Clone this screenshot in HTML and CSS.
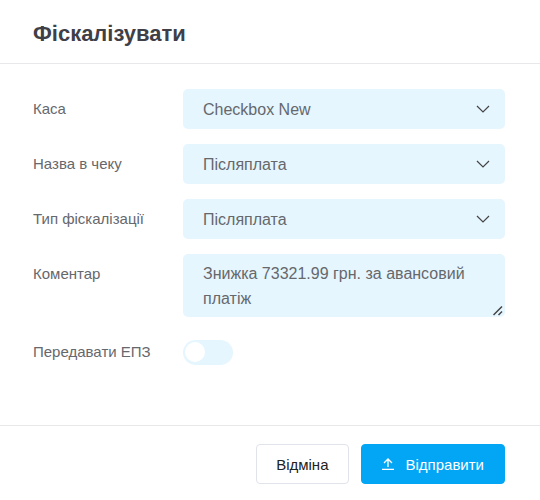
FILE: index.html
```html
<!DOCTYPE html>
<html lang="uk">
<head>
    <meta charset="UTF-8">
    <meta name="viewport" content="width=device-width, initial-scale=1.0">
    <title>Фіскалізувати</title>
    <link rel="stylesheet" href="styles.css">
</head>
<body>

<form class="modal">
    <header class="modal-header">
        <h1>Фіскалізувати</h1>
    </header>

    <div class="modal-body">
        <div class="form-group">
            <label for="cashbox">Каса</label>
            <select id="cashbox" name="cashbox">
                <option>Checkbox New</option>
            </select>
        </div>
        <div class="form-group">
            <label for="receiptName">Назва в чеку</label>
            <select id="receiptName" name="receiptName">
                <option>Післяплата</option>
            </select>
        </div>
        <div class="form-group">
            <label for="type">Тип фіскалізації</label>
            <select id="type" name="type">
                <option>Післяплата</option>
            </select>
        </div>
        <div class="form-group">
            <label for="comment">Коментар</label>
            <div class="textarea-wrap">
                <textarea id="comment" name="comment" rows="2">Знижка 73321.99 грн. за авансовий платіж</textarea>
                <svg class="resize-grip" width="10" height="10" viewBox="0 0 10 10" aria-hidden="true">
                    <path d="M0.5 9L9 0.5M5.5 9L9 5.5" />
                </svg>
            </div>
        </div>
        <div class="form-group form-group-switch">
            <label for="epz">Передавати ЕПЗ</label>
            <input type="checkbox" class="switch" id="epz" name="epz">
        </div>
    </div>

    <footer class="modal-footer">
        <button type="button" class="btn btn-cancel">Відміна</button>
        <button type="submit" class="btn btn-submit">
            <svg width="12" height="12" viewBox="0 0 12 12" aria-hidden="true">
                <path d="M0 11.5H12M6 9V1M2 5L6 1L10 5" />
            </svg>
            Відправити
        </button>
    </footer>
</form>

</body>
</html>
```
FILE: styles.css
```css
* {
    box-sizing: border-box;
}
body {
    margin: 0;
    font-family: "Liberation Sans", Arial, sans-serif;
    font-size: 15px;
    color: #66686c;
    background-color: #fff;
}
.modal-header {
    padding: 20px 33px 15px;
    border-bottom: 1px solid #e8e8ea;
}
h1 {
    margin: 0;
    font-size: 22px;
    line-height: 28px;
    color: #3f3f48;
}
.modal-body {
    display: flex;
    flex-direction: column;
    gap: 15px;
    padding: 25px 35px 53px 33px;
}
.form-group {
    display: grid;
    grid-template-columns: 150px 1fr;
    align-items: start;
}
label {
    line-height: 40px;
}
select,
textarea {
    display: block;
    width: 100%;
    border: none;
    border-radius: 5px;
    background-color: #e5f6ff;
    color: #66686c;
    font-family: inherit;
    font-size: 16px;
}
select {
    height: 40px;
    padding: 0 40px 0 20px;
    appearance: none;
    background-image: url("data:image/svg+xml,%3Csvg xmlns='http://www.w3.org/2000/svg' width='14' height='8' viewBox='0 0 14 8'%3E%3Cpath d='M1 1L7 7L13 1' fill='none' stroke='%23444' stroke-width='1.2'/%3E%3C/svg%3E");
    background-repeat: no-repeat;
    background-position: right 15px center;
}
.textarea-wrap {
    position: relative;
}
textarea {
    height: 63px;
    padding: 7px 20px 6px;
    line-height: 25px;
    resize: none;
    overflow: hidden;
}
.resize-grip {
    position: absolute;
    right: 2px;
    bottom: 1px;
    fill: none;
    stroke: #444;
    stroke-width: 1.5;
}
.form-group-switch {
    align-items: center;
}
.switch {
    display: flex;
    align-items: center;
    width: 50px;
    height: 25px;
    margin: 0;
    padding: 2px;
    appearance: none;
    border-radius: 13px;
    background-color: #e5f6ff;
    cursor: pointer;
}
.switch::before {
    content: "";
    width: 20px;
    height: 20px;
    border-radius: 50%;
    background-color: #fff;
}
.switch:checked {
    justify-content: flex-end;
    background-color: #03a5f5;
}
.modal-footer {
    display: flex;
    justify-content: flex-end;
    gap: 12px;
    padding: 18px 35px 16px;
    border-top: 1px solid #e8e8ea;
}
.btn {
    display: flex;
    align-items: center;
    gap: 12px;
    height: 40px;
    padding: 0 19px;
    border: 1px solid #e0e3ea;
    border-radius: 4px;
    font-family: inherit;
    font-size: 15px;
    cursor: pointer;
}
.btn-cancel {
    background-color: #fff;
    color: #222;
}
.btn-submit {
    padding: 0 20px;
    border-color: #03a5f5;
    background-color: #03a5f5;
    color: #fff;
}
.btn svg {
    fill: none;
    stroke: #fff;
    stroke-width: 1.3;
}
```
